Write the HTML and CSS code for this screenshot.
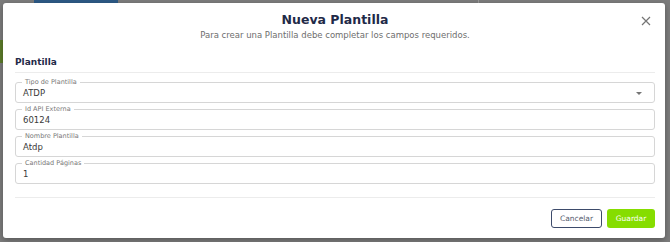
FILE: index.html
```html
<!DOCTYPE html>
<html lang="es">
<head>
    <meta charset="UTF-8">
    <meta name="viewport" content="width=device-width, initial-scale=1.0">
    <title>Nueva Plantilla</title>
    <link rel="stylesheet" href="styles.css">
</head>
<body>
    <div class="backdrop">
        <div class="bg-tab"></div>
        <div class="bg-side"></div>
        <div class="bg-line"></div>
    </div>
    <div class="modal">
        <div class="modal-header">
            <h2>Nueva Plantilla</h2>
            <p>Para crear una Plantilla debe completar los campos requeridos.</p>
            <button class="close" aria-label="Cerrar">
                <svg width="10" height="10" viewBox="0 0 10 10"><path d="M1 1L9 9M9 1L1 9" stroke="#757575" stroke-width="1.2"/></svg>
            </button>
        </div>
        <div class="section-title">Plantilla</div>
        <form class="fields">
            <div class="field">
                <span class="label">Tipo de Plantilla</span>
                <div class="value">ATDP</div>
                <svg class="arrow" width="6" height="3" viewBox="0 0 6 3"><path d="M0 0L6 0L3 3Z" fill="#757575"/></svg>
            </div>
            <div class="field">
                <span class="label">Id API Externa</span>
                <div class="value">60124</div>
            </div>
            <div class="field">
                <span class="label">Nombre Plantilla</span>
                <div class="value">Atdp</div>
            </div>
            <div class="field">
                <span class="label">Cantidad Páginas</span>
                <div class="value">1</div>
            </div>
        </form>
        <div class="actions">
            <button type="button" class="btn btn-outline">Cancelar</button>
            <button type="button" class="btn btn-green">Guardar</button>
        </div>
    </div>
</body>
</html>
```

FILE: styles.css
```css
body {
    font-family: "DejaVu Sans", sans-serif;
    background-color: #7c7c7c;
    margin: 0;
    padding: 3px;
    height: 242px;
    box-sizing: border-box;
    overflow: hidden;
}
.backdrop {
    position: absolute;
    top: 0;
    left: 0;
    width: 670px;
    height: 242px;
}
.bg-tab {
    position: absolute;
    left: 34px;
    top: 0;
    width: 84px;
    height: 3px;
    background: #2d5a86;
}
.bg-side {
    position: absolute;
    left: 0;
    top: 40px;
    width: 3px;
    height: 23px;
    background: #5d7d2a;
}
.bg-line {
    position: absolute;
    left: 478px;
    top: 0;
    width: 1px;
    height: 3px;
    background: #9a9a9a;
}
.modal {
    position: relative;
    width: 662px;
    height: 235px;
    background: #fff;
    border-radius: 3px;
    box-shadow: 0 2px 6px rgba(0, 0, 0, 0.3);
    padding: 0 10px 0 12px;
    box-sizing: border-box;
}
.modal-header {
    text-align: center;
    padding-top: 8px;
    position: relative;
}
.modal-header h2 {
    margin: 0;
    font-size: 12.5px;
    font-weight: bold;
    color: #1f2a48;
    line-height: 17px;
}
.modal-header p {
    margin: 1px 0 0;
    font-size: 8.5px;
    color: #6e6e6e;
    line-height: 12px;
}
.close {
    position: absolute;
    right: 4px;
    top: 11px;
    background: none;
    border: none;
    padding: 0;
    cursor: pointer;
}
.section-title {
    margin-top: 16px;
    font-size: 9px;
    font-weight: bold;
    color: #1f2a48;
    padding-bottom: 5px;
    border-bottom: 1px solid #ececec;
}
.fields {
    margin-top: 9px;
    display: flex;
    flex-direction: column;
    gap: 6px;
    padding-bottom: 13px;
    border-bottom: 1px solid #ececec;
}
.field {
    position: relative;
    height: 21px;
    border: 1px solid #d6d6d6;
    border-radius: 3px;
    box-sizing: border-box;
    display: flex;
    align-items: center;
}
.field .label {
    position: absolute;
    left: 6px;
    top: -5px;
    padding: 0 3px;
    background: #fff;
    font-size: 6.5px;
    line-height: 8px;
    color: #777;
}
.field .value {
    padding-left: 7px;
    font-size: 8.5px;
    color: #3a3a3a;
}
.field .arrow {
    position: absolute;
    right: 12px;
    top: 9px;
}
.actions {
    display: flex;
    justify-content: flex-end;
    gap: 5px;
    margin-top: 11px;
}
.btn {
    height: 19px;
    padding: 0 6px;
    font-family: inherit;
    font-size: 7.5px;
    border-radius: 3px;
    cursor: pointer;
}
.btn-outline {
    background: #fff;
    border: 1px solid #3d4b6b;
    color: #555c6e;
    width: 51px;
}
.btn-green {
    background: #86dd00;
    border: none;
    color: #fff;
    width: 48px;
}
```
